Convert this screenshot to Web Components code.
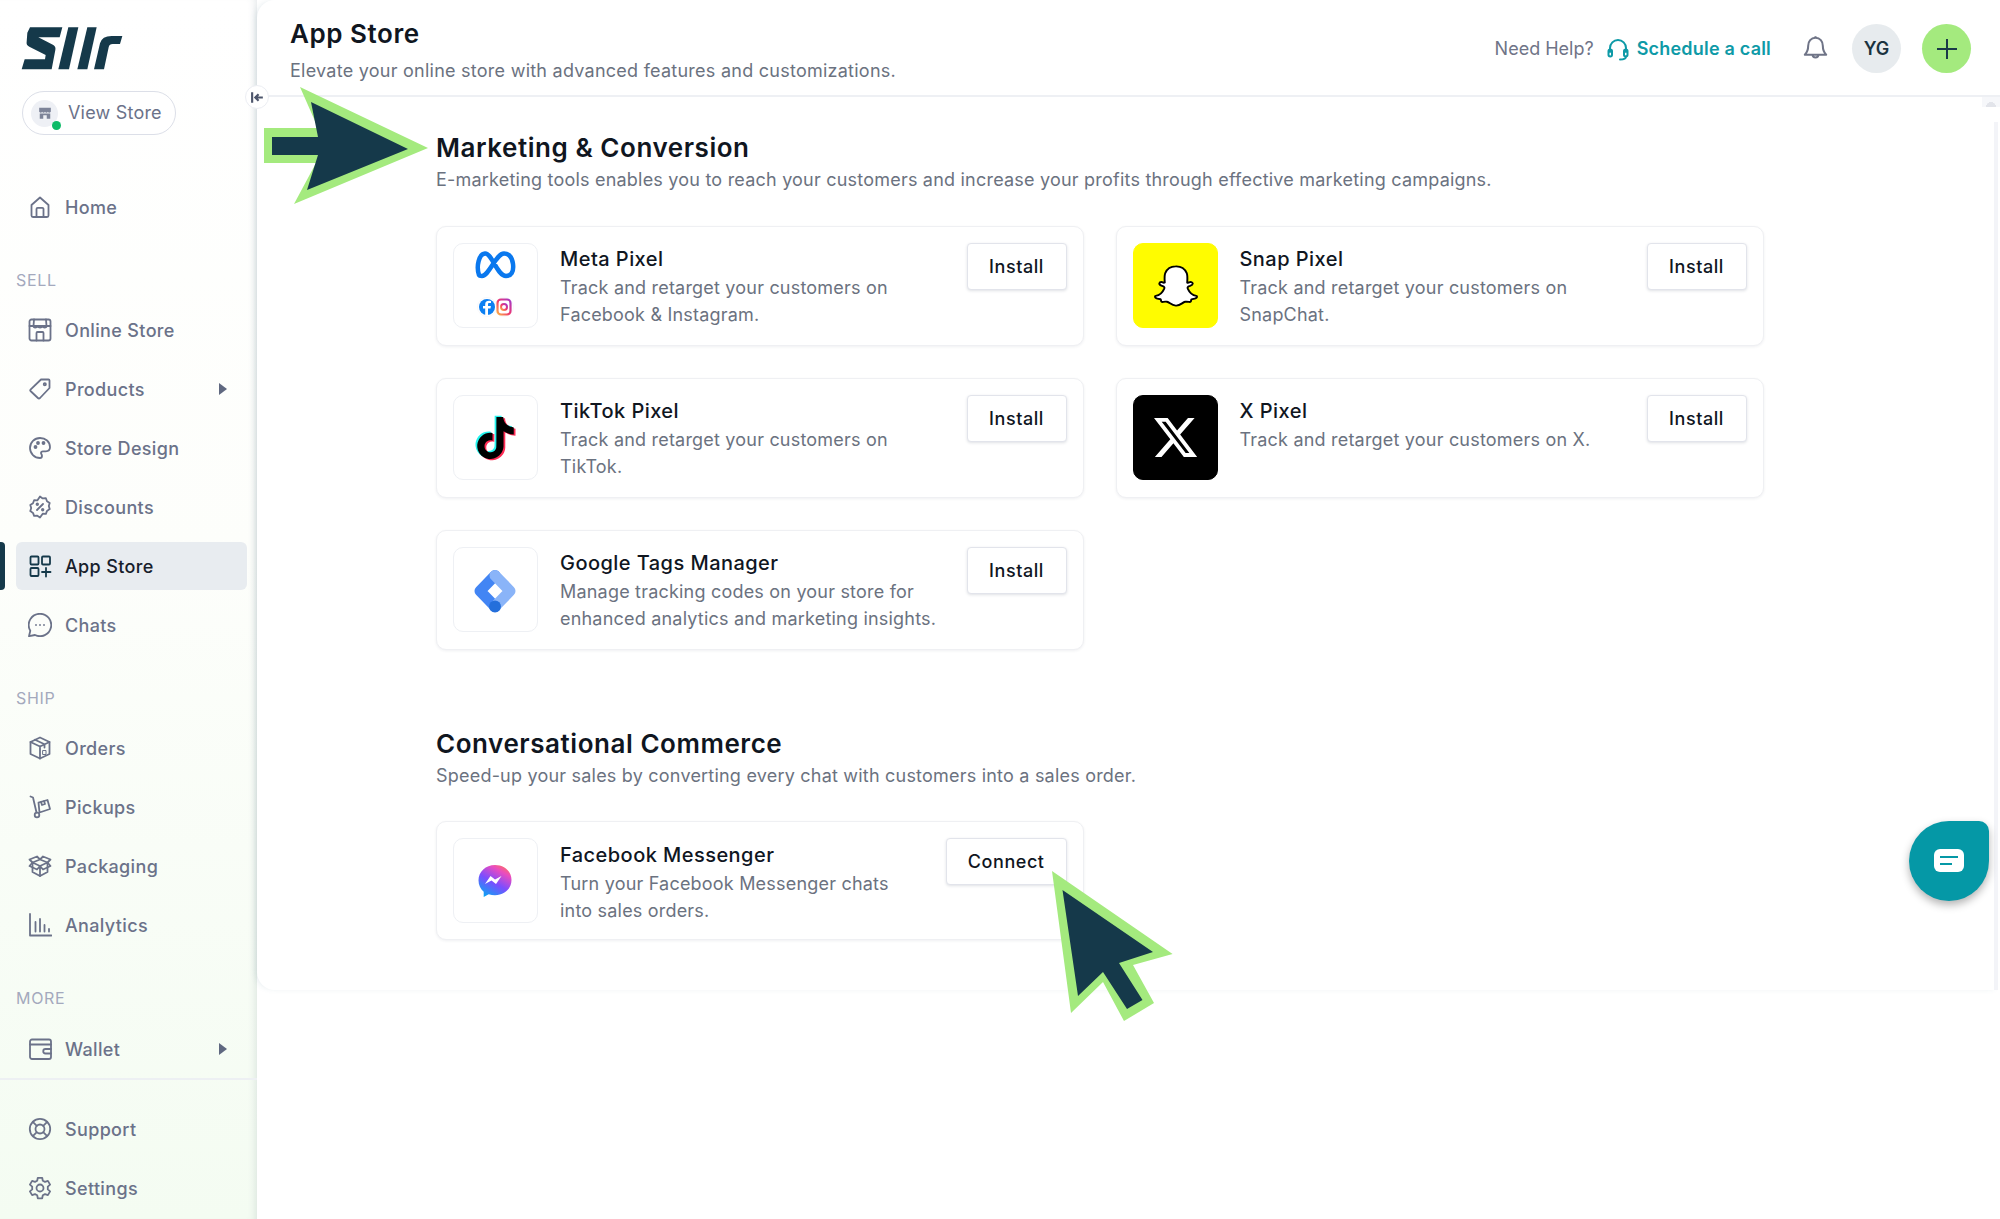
<!DOCTYPE html>
<html lang="en">
<head>
<meta charset="utf-8">
<title>App Store</title>
<style>
  html, body { margin: 0; height: 100%; background: #fff; }
  body { font-family: "Inter", "Liberation Sans", sans-serif; overflow: hidden; }
</style>
</head>
<body>
<store-shell>
  <side-bar slot="side"></side-bar>
  <top-bar slot="top" heading="App Store" sub="Elevate your online store with advanced features and customizations."></top-bar>

  <app-section heading="Marketing &amp; Conversion" sub="E-marketing tools enables you to reach your customers and increase your profits through effective marketing campaigns.">
    <app-card logo="meta" name="Meta Pixel" action="Install">Track and retarget your customers on Facebook &amp; Instagram.</app-card>
    <app-card logo="snap" name="Snap Pixel" action="Install">Track and retarget your customers on SnapChat.</app-card>
    <app-card logo="tiktok" name="TikTok Pixel" action="Install">Track and retarget your customers on TikTok.</app-card>
    <app-card logo="x" name="X Pixel" action="Install">Track and retarget your customers on X.</app-card>
    <app-card logo="gtm" name="Google Tags Manager" action="Install">Manage tracking codes on your store for enhanced analytics and marketing insights.</app-card>
  </app-section>

  <app-section class="second" heading="Conversational Commerce" sub="Speed-up your sales by converting every chat with customers into a sales order.">
    <app-card logo="messenger" name="Facebook Messenger" action="Connect">Turn your Facebook Messenger chats into sales orders.</app-card>
  </app-section>

  <chat-fab slot="over"></chat-fab>
  <guide-arrows slot="over"></guide-arrows>
</store-shell>

<script>
const ICONS = {
    home: '<path d="M3.500 10 12 2.500l8.500 7.500v10.500a1.500 1.500 0 0 1-1.500 1.500H5a1.500 1.500 0 0 1-1.500-1.500z"/><path d="M8.500 22v-8a1.200 1.200 0 0 1 1.200-1.200h4.600a1.200 1.200 0 0 1 1.200 1.200v8"/>',
    store: '<rect x="1.500" y="1.500" width="21" height="21" rx="2"/><path d="M1.500 8h21M5.500 8c0 2 3 2 4.500 0 .5 2 3.500 2 4.500 0 1 2 3.500 2 4.500 0M6 1.500 5.500 8M18 1.500l.5 6.500"/><path d="M8.500 22.500V15a1 1 0 0 1 1-1h5a1 1 0 0 1 1 1v7.500"/>',
    tag: '<path d="M13 2.500h7.500a1 1 0 0 1 1 1V11l-9.500 10a1.500 1.500 0 0 1-2.100 0L2.500 14a1 1 0 0 1 0-1.400z"/><circle cx="16.800" cy="7.200" r="1.100"/>',
    palette: '<path d="M12 2a10 10 0 1 0 0 20c1.500 0 2-1 2-2 0-1.500-1-1.800-1-3 0-1 .8-1.700 2-1.700h2.800c2.500 0 4.200-1.500 4.200-4C22 5.500 17.500 2 12 2z"/><circle cx="7.500" cy="11" r="1"/><circle cx="10" cy="7" r="1"/><circle cx="15.500" cy="7" r="1"/>',
    discount: '<path d="M12 1.500l2.700 1.900 3.200-.2 1.100 3 2.700 1.800-.9 3 .9 3.100-2.700 1.800-1.100 3-3.200-.2L12 22.500l-2.700-1.800-3.200.2-1.100-3-2.700-1.800.9-3.100-.9-3 2.700-1.800 1.100-3 3.200.2z"/><path d="M9 15l6-6"/><circle cx="9.300" cy="9.300" r=".8"/><circle cx="14.700" cy="14.700" r=".8"/>',
    apps: '<rect x="2.500" y="2.500" width="8" height="8" rx="1"/><rect x="14" y="2.500" width="8" height="8" rx="1"/><rect x="2.500" y="14" width="8" height="8" rx="1"/><path d="M18 14v8.500M14 18h8.500"/>',
    chat: '<path d="M12 .8a11.200 11.200 0 1 1-5 21.200L1 23.200l1.300-5.500A11.200 11.200 0 0 1 12 .8z"/><path d="M8 12h.01M12 12h.01M16 12h.01"/>',
    orders: '<path d="M12 1.500 2.500 6v12l9.500 4.500 9.500-4.500V6z"/><path d="M2.500 6l9.500 4.500L21.500 6M12 10.500v12M7 3.800l9.500 4.500v3.200"/><path d="M15 14.500h3v4h-3z" stroke-width="1"/>',
    pickups: '<path d="M2.500 1.500 5 2.500l3.500 15"/><circle cx="9" cy="20" r="2.300"/><path d="M11.500 17.500 22 14l-2.500-9-9 2.700z"/><path d="M13 7l1 3 3-1-1-3"/>',
    packaging: '<path d="M4.500 8.500 12 12l7.500-3.500V18L12 22l-7.500-4z"/><path d="M12 12v10M4.500 8.500 1.500 5.500 9 2.500l3 3 3-3 7.500 3-3 3M12 5.500l7.500 3M12 5.500l-7.500 3M4.500 8.500 1.500 12l7.500 3.500L12 12l3 3.500 7.500-3.500-3-3.500"/>',
    analytics: '<path d="M2 1v21.500h21.500"/><path d="M7.500 9v9.500M12 6v12.500M16.500 12v6.500M21 16v2.500"/>',
    wallet: '<rect x="2" y="2.500" width="21" height="19.500" rx="2"/><path d="M2 7.500h21M23 12h-5.500a2.200 2.200 0 0 0 0 4.500H23"/>',
    support: '<circle cx="12" cy="12" r="10.200"/><circle cx="12" cy="12" r="4.500"/><path d="M4.800 4.800l4 4M19.200 4.800l-4 4M4.800 19.200l4-4M19.200 19.200l-4-4"/>',
    settings: '<circle cx="12" cy="12" r="3.500"/><path d="M9.800 1.800h4.400l.6 3 2.200 1.100 2.900-1 2.200 3.700-2.300 2v2.800l2.300 2-2.200 3.700-2.900-1-2.200 1.200-.6 3H9.800l-.6-3L7 18.100l-2.900 1-2.200-3.700 2.300-2v-2.800l-2.300-2 2.200-3.700 2.900 1 2.200-1.100z"/>',
};

const LOGOS = {
    meta: `<path d="M25 31C22 22 25 10 31 9.500 38 9 43 32 52 32c5 0 8-4 7-12-1-7-4-10.500-9-10.500-8 0-15 22.500-22 22.500-2 0-2.500 0-3-1z" fill="none" stroke="#0a78ee" stroke-width="4.500" stroke-linejoin="round"/>
        <circle cx="33" cy="63" r="9.500" fill="#fff" stroke="#f1f2f6" stroke-width=".6"/><circle cx="50" cy="63" r="9.500" fill="#fff" stroke="#f1f2f6" stroke-width=".6"/>
        <rect x="43.500" y="55.500" width="13" height="15" rx="3.500" fill="none" stroke="url(#ig)" stroke-width="2.200"/><circle cx="50" cy="63" r="3" fill="none" stroke="url(#ig)" stroke-width="2"/>
        <circle cx="33" cy="63" r="8" fill="#0c7ff2"/>
        <path d="M34 71v-6.500h2.500l.4-2.500H34v-1.600c0-.9.4-1.300 1.300-1.300H37v-2.200c-2.500-.5-5.800-.5-5.800 3.300V62H29v2.500h2.200V71z" fill="#fff"/>
        <defs><linearGradient id="ig" x1="0" y1="1" x2="1" y2="0"><stop offset="0" stop-color="#fcb045"/><stop offset=".5" stop-color="#f0366f"/><stop offset="1" stop-color="#a238c9"/></linearGradient></defs>`,
    snap: `<g transform="translate(21 21) scale(1.750)"><path fill="#fff" stroke="#000" stroke-width="1.100" stroke-linejoin="round" d="M12.206.793c.99 0 4.347.276 5.930 3.821.529 1.193.403 3.219.299 4.847l-.003.060c-.012.180-.022.345-.030.510.075.045.203.090.401.090.3-.016.659-.120 1.033-.301.165-.088.344-.104.464-.104.182 0 .359.029.509.090.45.149.734.479.734.838.015.449-.39.839-1.213 1.168-.089.029-.209.075-.344.119-.45.135-1.139.36-1.333.81-.09.224-.061.524.12.868l.015.015c.06.136 1.526 3.475 4.791 4.014.255.044.435.27.42.509 0 .075-.015.149-.045.225-.24.569-1.273.988-3.146 1.271-.059.091-.12.375-.164.57-.029.179-.074.36-.134.553-.076.271-.27.405-.555.405h-.03c-.135 0-.313-.031-.538-.074-.36-.075-.765-.135-1.273-.135-.3 0-.599.015-.913.074-.6.104-1.123.464-1.723.884-.853.599-1.826 1.288-3.294 1.288-.06 0-.119-.015-.18-.015h-.149c-1.468 0-2.427-.675-3.279-1.288-.599-.42-1.107-.779-1.707-.884-.314-.045-.629-.074-.928-.074-.54 0-.958.089-1.272.149-.211.043-.391.074-.54.074-.374 0-.523-.224-.583-.42-.061-.192-.09-.389-.135-.567-.046-.181-.105-.494-.166-.57-1.918-.222-2.95-.642-3.189-1.226-.031-.063-.052-.15-.055-.225-.015-.243.165-.465.42-.509 3.264-.54 4.73-3.879 4.791-4.02l.016-.029c.18-.345.224-.645.119-.869-.195-.434-.884-.658-1.332-.809-.121-.029-.24-.074-.346-.119-1.107-.435-1.257-.93-1.197-1.273.09-.479.674-.793 1.168-.793.146 0 .27.029.383.074.42.194.789.3 1.104.3.234 0 .384-.06.465-.105l-.046-.569c-.098-1.626-.225-3.651.307-4.837C7.392 1.077 10.739.807 11.727.807l.419-.015h.06z"/></g>`,
    tiktok: (() => {
        const d = 'M12.525.02c1.310-.02 2.610-.01 3.910-.02.08 1.530.63 3.090 1.750 4.170 1.120 1.110 2.700 1.620 4.240 1.790v4.030c-1.440-.05-2.890-.35-4.200-.97-.57-.26-1.100-.59-1.620-.93-.01 2.920.01 5.840-.02 8.750-.08 1.400-.54 2.790-1.350 3.940-1.310 1.920-3.580 3.170-5.910 3.210-1.430.08-2.860-.31-4.080-1.030-2.020-1.190-3.440-3.370-3.650-5.710-.02-.5-.03-1-.01-1.490.18-1.900 1.120-3.720 2.580-4.960 1.660-1.440 3.980-2.130 6.150-1.720.02 1.480-.04 2.960-.04 4.440-.99-.32-2.150-.23-3.020.37-.63.41-1.110 1.040-1.360 1.750-.21.51-.15 1.070-.14 1.610.24 1.640 1.820 3.020 3.500 2.870 1.120-.01 2.190-.66 2.770-1.610.19-.33.4-.67.41-1.060.1-1.790.06-3.570.07-5.360.01-4.030-.01-8.050.02-12.070z';
        return `<g transform="translate(20.500 21) scale(1.750)"><path d="${d}" fill="#25f4ee" transform="translate(-1 -.7)"/><path d="${d}" fill="#fe2c55" transform="translate(1 .7)"/><path d="${d}" fill="#000"/></g>`;
    })(),
    x: `<g transform="translate(17.500 17.500) scale(2)"><path fill="#fff" d="M18.244 2.250h3.308l-7.227 8.260 8.502 11.240H16.170l-5.214-6.817L4.990 21.750H1.680l7.730-8.835L1.254 2.250H8.080l4.713 6.231zm-1.161 17.520h1.833L7.084 4.126H5.117z"/></g>`,
    gtm: `<path d="M41 27.500 26 43 41 58.500" fill="none" stroke="#4285f4" stroke-width="11" stroke-linejoin="round" stroke-linecap="round"/>
        <path d="M41 27.500 56 43 41 58.500" fill="none" stroke="#8ab4f8" stroke-width="11" stroke-linejoin="round" stroke-linecap="round"/>
        <circle cx="41" cy="58.500" r="6" fill="#246fdb"/>`,
    messenger: `<defs><linearGradient id="ms" x1=".2" y1="1" x2=".8" y2="0"><stop offset="0" stop-color="#09a6f3"/><stop offset=".45" stop-color="#7b4dff"/><stop offset=".8" stop-color="#e94cc0"/><stop offset="1" stop-color="#ff7061"/></linearGradient></defs>
        <path d="M41 26c-9.300 0-16.500 6.600-16.500 15.300 0 4.700 2 8.700 5.200 11.400v5.300l5-2.700c2 .6 4.100.9 6.300.9 9.300 0 16.500-6.600 16.500-15.300S50.300 26 41 26z" fill="url(#ms)"/>
        <path d="M31 45l5.500-8 4.500 3.500 6.500-3.500-5.500 8-4.500-3.500z" fill="#fff"/>`,
};

class StoreShell extends HTMLElement {
    constructor() {
        super();
        this.attachShadow({ mode: 'open' });
        this.shadowRoot.innerHTML = `
            <style>
                :host { display: flex; height: 1219px; position: relative; overflow: hidden; background: #fff; }
                .panel {
                    flex: 1;
                    height: 990px;
                    background: #fff;
                    border-radius: 18px 0 0 18px;
                    box-shadow: -3px 0 7px -3px rgba(60, 110, 130, .2);
                    position: relative;
                    display: flex;
                    flex-direction: column;
                }
                .content { padding: 35px 0 0 179px; width: 1327px; }
                .track { position: absolute; right: 0; top: 97px; bottom: 0; width: 18px; }
                .track::before {
                    content: "";
                    position: absolute;
                    left: 0; right: 0; top: 0;
                    height: 10px;
                    background: radial-gradient(ellipse 5px 5px at 50% 100%, #e2e4ea 98%, #f6f7fa 100%);
                }
                .track::after { content: ""; position: absolute; left: 12px; width: 4px; top: 25px; bottom: 0; background: #f3f4f8; }
            </style>
            <slot name="side"></slot>
            <div class="panel">
                <slot name="top"></slot>
                <div class="content"><slot></slot></div>
                <div class="track"></div>
            </div>
            <slot name="over"></slot>
        `;
    }
}

class SideBar extends HTMLElement {
    constructor() {
        super();
        this.attachShadow({ mode: 'open' });
        this.shadowRoot.innerHTML = `
            <style>
                :host {
                    display: block;
                    width: 257px;
                    flex: none;
                    height: 1219px;
                    box-sizing: border-box;
                    padding-top: 26px;
                    background: linear-gradient(#fff 0%, #fdfefb 45%, #f4fcf2 100%);
                    box-shadow: inset -8px 0 8px -7px rgba(60, 90, 100, .16);
                }
                .logo { display: block; margin-left: 20px; width: 104px; height: 45px; }
                .pill {
                    margin: 20px 0 48px 22px;
                    width: 154px;
                    height: 44px;
                    box-sizing: border-box;
                    border: 1.5px solid #dcdfe8;
                    border-radius: 22px;
                    display: flex;
                    align-items: center;
                    gap: 10px;
                    padding-left: 8px;
                    font-size: 18px;
                    letter-spacing: .2px;
                    color: #6b7289;
                    background: #fff;
                }
                .pill span:last-child { margin-top: -2px; }
                .shop { width: 27px; height: 27px; border-radius: 50%; background: #eef0f5; position: relative; display: flex; align-items: center; justify-content: center; }
                .shop i { position: absolute; right: -3px; bottom: -3px; width: 9px; height: 9px; border-radius: 50%; background: #0dbb68; }
                .shop svg { width: 14px; height: 14px; }
                .label { height: 18px; line-height: 18px; margin: 40px 0 17px 16px; font-size: 16px; color: #a4a9bd; letter-spacing: .7px; }
                .label.more { margin-bottom: 18px; }
                hr { border: 0; height: 2px; background: #edf0f3; margin: 5px 0 25px; }
            </style>
            <svg class="logo" viewBox="60 78 312 135" fill="#15394a">
                <path d="M82 98 90 82H187L179 112H115L160 135Q168 140 166 150L155 208H65L74 178H135L137 165 88 140Q78 135 80 125Z"/>
                <path d="M205 82H235L207 208H175Z"/>
                <path d="M262 82H290L262 208H232Z"/>
                <path d="M282 208 300 130Q306 108 335 108H367L360 132H338Q328 132 326 142L312 208Z"/>
            </svg>
            <div class="pill">
                <span class="shop">
                    <svg viewBox="0 0 24 24" fill="#7c8398"><path d="M2 3h20v7c-2 2-4 2-5 0-1 2-4 2-5 0-1 2-4 2-5 0-1 2-3 2-5 0z"/><path d="M3 13h18v9h-6v-6H9v6H3z"/></svg>
                    <i></i>
                </span>
                <span>View Store</span>
            </div>
            <nav-item icon="home">Home</nav-item>
            <div class="label">SELL</div>
            <nav-item icon="store">Online Store</nav-item>
            <nav-item icon="tag" caret>Products</nav-item>
            <nav-item icon="palette">Store Design</nav-item>
            <nav-item icon="discount">Discounts</nav-item>
            <nav-item icon="apps" active>App Store</nav-item>
            <nav-item icon="chat">Chats</nav-item>
            <div class="label">SHIP</div>
            <nav-item icon="orders">Orders</nav-item>
            <nav-item icon="pickups">Pickups</nav-item>
            <nav-item icon="packaging">Packaging</nav-item>
            <nav-item icon="analytics">Analytics</nav-item>
            <div class="label more">MORE</div>
            <nav-item icon="wallet" caret last>Wallet</nav-item>
            <hr>
            <nav-item icon="support">Support</nav-item>
            <nav-item icon="settings">Settings</nav-item>
        `;
    }
}

class NavItem extends HTMLElement {
    constructor() {
        super();
        this.attachShadow({ mode: 'open' });
    }

    connectedCallback() {
        const icon = ICONS[this.getAttribute('icon')];
        const caret = this.hasAttribute('caret') ? '<svg class="caret" viewBox="0 0 8 12"><path d="M0 0l8 6-8 6z" fill="#5f6880"/></svg>' : '';
        const bar = this.hasAttribute('active') ? '<b class="bar"></b>' : '';
        this.shadowRoot.innerHTML = `
            <style>
                :host { display: block; position: relative; height: 48px; margin: 0 10px 11px 16px; }
                :host([last]) { margin-bottom: 0; }
                .row {
                    display: flex;
                    align-items: center;
                    height: 100%;
                    padding: 0 20px 0 12px;
                    gap: 13px;
                    border-radius: 6px;
                    font-size: 18px;
                    font-weight: 500;
                    letter-spacing: .35px;
                    color: #6b7289;
                }
                svg.ic { width: 24px; height: 24px; flex: none; fill: none; stroke: currentColor; stroke-width: 1.800; stroke-linecap: round; stroke-linejoin: round; }
                .caret { width: 8px; height: 12px; margin-left: auto; }
                :host([active]) .row { background: #e8ecf0; color: #17202b; }
                :host([active]) svg.ic { stroke: #15394a; }
                .bar { position: absolute; left: -16px; top: 0; bottom: 0; width: 5px; background: #15394a; border-radius: 0 4px 4px 0; }
            </style>
            ${bar}
            <div class="row"><svg class="ic" viewBox="0 0 24 24">${icon}</svg><span><slot></slot></span>${caret}</div>
        `;
    }
}

class TopBar extends HTMLElement {
    constructor() {
        super();
        this.attachShadow({ mode: 'open' });
    }

    connectedCallback() {
        this.shadowRoot.innerHTML = `
            <style>
                :host {
                    display: flex;
                    align-items: center;
                    justify-content: space-between;
                    height: 97px;
                    box-sizing: border-box;
                    border-bottom: 2px solid #eef0f4;
                    padding: 0 29px 0 33px;
                    position: relative;
                    flex: none;
                }
                .head { margin-top: 5px; }
                h1 { margin: 0 0 9px; font-size: 26px; line-height: 32px; font-weight: 600; letter-spacing: .55px; color: #10161f; }
                p { margin: 0; font-size: 18px; line-height: 24px; letter-spacing: .25px; color: #6b7280; }
                .right { display: flex; align-items: center; margin-top: 2px; font-size: 18px; color: #6f7487; }
                .call { display: flex; align-items: center; gap: 8px; margin-left: 13px; color: #0e9aa7; font-weight: 600; letter-spacing: .2px; }
                .call svg { width: 22px; height: 24px; fill: none; stroke: #0e9aa7; stroke-width: 2; stroke-linecap: round; }
                .bell { width: 27px; height: 27px; margin: 0 23px 0 31px; fill: none; stroke: #6f7487; stroke-width: 1.800; stroke-linejoin: round; }
                .round { width: 49px; height: 49px; border-radius: 50%; display: flex; align-items: center; justify-content: center; }
                .me { background: #e7ebee; color: #1b3340; font-weight: 600; margin-right: 21px; }
                .add { background: #a4ea7e; }
                .add svg { width: 22px; height: 22px; stroke: #1a3a48; stroke-width: 2; }
                .collapse {
                    position: absolute; left: -12px; bottom: -14px;
                    width: 24px; height: 24px; border-radius: 50%;
                    background: #fff; border: 1px solid #eceef3;
                    box-sizing: border-box;
                    display: flex; align-items: center; justify-content: center;
                }
                .collapse svg { width: 15px; height: 15px; fill: none; stroke: #4d566c; stroke-width: 2; }
            </style>
            <div class="head"><h1>${this.getAttribute('heading')}</h1><p>${this.getAttribute('sub')}</p></div>
            <div class="right">
                <span>Need Help?</span>
                <span class="call">
                    <svg viewBox="0 0 22 24"><path d="M3 15V11a8 8 0 0 1 16 0v4"/><rect x="1.500" y="12.500" width="3.500" height="7" rx="1.700"/><rect x="17" y="12.500" width="3.500" height="7" rx="1.700"/><path d="M19 19.500c0 2-2.500 3-6 3"/></svg>
                    <span>Schedule a call</span>
                </span>
                <svg class="bell" viewBox="0 0 24 24"><path d="M12 2.500c-4 0-6.500 3-6.500 7 0 4-1 6-3 8h19c-2-2-3-4-3-8 0-4-2.500-7-6.500-7z"/><path d="M9.500 17.500a2.500 2.500 0 0 0 5 0M12 1v1.500"/></svg>
                <span class="round me">YG</span>
                <span class="round add"><svg viewBox="0 0 22 22"><path d="M11 1v20M1 11h20"/></svg></span>
            </div>
            <div class="collapse"><svg viewBox="0 0 14 14"><path d="M2 2v10M12 7H5M8 4 5 7l3 3"/></svg></div>
        `;
    }
}

class AppSection extends HTMLElement {
    constructor() {
        super();
        this.attachShadow({ mode: 'open' });
    }

    connectedCallback() {
        this.shadowRoot.innerHTML = `
            <style>
                :host { display: block; }
                :host(.second) { margin-top: 78px; }
                :host(.second) p { margin-bottom: 33px; }
                h2 { margin: 0 0 4px; font-size: 26px; line-height: 32px; font-weight: 600; letter-spacing: .55px; color: #10161f; }
                p { margin: 0 0 34px; font-size: 18px; line-height: 24px; letter-spacing: .21px; color: #6b7280; }
                .grid { display: grid; grid-template-columns: 647.5px 648px; gap: 32px; }
            </style>
            <h2>${this.getAttribute('heading')}</h2>
            <p>${this.getAttribute('sub')}</p>
            <div class="grid"><slot></slot></div>
        `;
    }
}

class AppCard extends HTMLElement {
    constructor() {
        super();
        this.attachShadow({ mode: 'open' });
    }

    connectedCallback() {
        const logo = this.getAttribute('logo');
        const brandBg = { snap: '#fffc00', x: '#000' }[logo];
        this.shadowRoot.innerHTML = `
            <style>
                :host {
                    display: flex;
                    align-items: flex-start;
                    gap: 22px;
                    height: 120px;
                    box-sizing: border-box;
                    padding: 16px;
                    border: 1px solid #eff0f3;
                    border-radius: 10px;
                    background: #fff;
                    box-shadow: 0 1px 3px rgba(30, 40, 70, .07);
                }
                :host([logo="messenger"]) { height: 119px; }
                .logo {
                    flex: none;
                    width: 85px;
                    height: 85px;
                    box-sizing: border-box;
                    border: 1px solid ${brandBg ? brandBg : '#eef0f4'};
                    border-radius: 10px;
                    background: ${brandBg || '#fff'};
                }
                .logo svg { display: block; width: 83px; height: 83px; }
                .body { flex: 1; min-width: 0; padding: 1px 0 0 0; }
                :host([logo="messenger"]) .body { padding: 2px 24px 0 0; }
                .name { font-size: 20px; line-height: 30px; font-weight: 500; letter-spacing: .45px; color: #10161f; }
                .desc { font-size: 18px; line-height: 27px; letter-spacing: .2px; color: #6b7280; }
                button {
                    flex: none;
                    font: inherit;
                    font-size: 18px;
                    font-weight: 500;
                    letter-spacing: .55px;
                    color: #10161f;
                    height: 47px;
                    padding: 0 21px;
                    min-width: 100px;
                    background: #fff;
                    border: 1px solid #e2e4eb;
                    border-radius: 4px;
                    box-shadow: 0 1px 3px rgba(30, 40, 70, .14);
                }
            </style>
            <div class="logo"><svg viewBox="0 0 83 83">${LOGOS[logo]}</svg></div>
            <div class="body">
                <div class="name">${this.getAttribute('name')}</div>
                <div class="desc"><slot></slot></div>
            </div>
            <button>${this.getAttribute('action')}</button>
        `;
    }
}

class ChatFab extends HTMLElement {
    constructor() {
        super();
        this.attachShadow({ mode: 'open' });
        this.shadowRoot.innerHTML = `
            <style>
                :host {
                    position: absolute;
                    left: 1909px;
                    top: 821px;
                    width: 80px;
                    height: 80px;
                    border-radius: 50% 10px 50% 50%;
                    background: #0598a6;
                    box-shadow: 0 4px 8px rgba(0, 0, 0, .3);
                    display: flex;
                    align-items: center;
                    justify-content: center;
                }
                svg { width: 30px; height: 24px; }
            </style>
            <svg viewBox="0 0 30 24"><rect width="30" height="23" rx="6" fill="#fff"/><path d="M6 8h18" stroke="#0598a6" stroke-width="2"/><path d="M6 15h12" stroke="#0598a6" stroke-width="2"/></svg>
        `;
    }
}

class GuideArrows extends HTMLElement {
    constructor() {
        super();
        this.attachShadow({ mode: 'open' });
        this.shadowRoot.innerHTML = `
            <style>
                :host { position: absolute; inset: 0; pointer-events: none; }
                svg { display: block; width: 2000px; height: 1219px; }
            </style>
            <svg viewBox="0 0 2000 1219">
                <polygon fill="#a4ea7e" points="300,87 428,148 294,204 316,163 264,163 264,128 318,128"/>
                <polygon fill="#15394a" points="311,102 408,149 307,190 318,155 272,155 272,137 318,137"/>
                <polygon fill="#a4ea7e" points="1052,871 1172.600,954 1133,965 1154,1003 1124,1021 1103,982 1071,1013"/>
                <polygon fill="#15394a" points="1062.500,890 1153,952 1119,963 1142.500,1000 1127,1009 1103,972 1078,996"/>
            </svg>
        `;
    }
}

customElements.define('store-shell', StoreShell);
customElements.define('side-bar', SideBar);
customElements.define('nav-item', NavItem);
customElements.define('top-bar', TopBar);
customElements.define('app-section', AppSection);
customElements.define('app-card', AppCard);
customElements.define('chat-fab', ChatFab);
customElements.define('guide-arrows', GuideArrows);
</script>
</body>
</html>
